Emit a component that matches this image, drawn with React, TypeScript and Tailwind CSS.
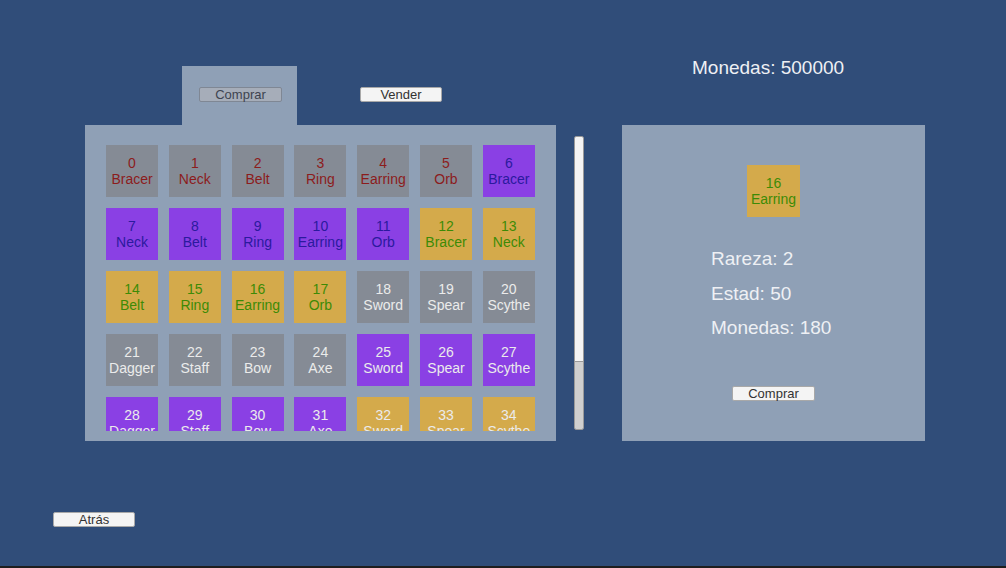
import React from "react";

type Tile = { n: number; name: string; bg: string; fg: string };

const acc = ["Bracer", "Neck", "Belt", "Ring", "Earring", "Orb"];
const weap = ["Sword", "Spear", "Scythe", "Dagger", "Staff", "Bow", "Axe"];

const GRAY = "bg-[#858b95]";
const PURPLE = "bg-[#8a40e4]";
const GOLD = "bg-[#d4aa4b]";

function buildTiles(): Tile[] {
  const out: Tile[] = [];
  for (let i = 0; i < 35; i++) {
    let name = "";
    let bg = GRAY;
    let fg = "text-[#ebebeb]";
    if (i < 18) {
      name = acc[i % 6];
      if (i < 6) {
        bg = GRAY;
        fg = "text-[#8c1c1c]";
      } else if (i < 12) {
        bg = PURPLE;
        fg = "text-[#2b1a9e]";
      } else {
        bg = GOLD;
        fg = "text-[#3d8a06]";
      }
    } else {
      name = weap[(i - 18) % 7];
      if (i < 25) bg = GRAY;
      else if (i < 32) bg = PURPLE;
      else bg = GOLD;
    }
    out.push({ n: i, name, bg, fg });
  }
  return out;
}

const tiles = buildTiles();

function ItemTile({ t }: { t: Tile }) {
  return (
    <div
      className={`w-[52px] h-[52px] ${t.bg} ${t.fg} flex flex-col items-center justify-center text-[14px] leading-[16px]`}
    >
      <span>{t.n}</span>
      <span>{t.name}</span>
    </div>
  );
}

function Btn({ label, w, gray }: { label: string; w: string; gray?: boolean }) {
  return (
    <div
      className={`${w} h-[15px] rounded-[2px] border flex items-center justify-center text-[13px] leading-none ${
        gray
          ? "bg-[#a6adb9] border-[#7f8794] text-[#3e4450]"
          : "bg-[#f4f4f4] border-[#a8a8a8] text-[#323232]"
      }`}
    >
      {label}
    </div>
  );
}

export default function App() {
  return (
    <div
      className="w-[1006px] h-[568px] flex flex-col bg-[#1e1e1e]"
      style={{ fontFamily: '"Liberation Sans", Arial, sans-serif' }}
    >
      <div className="w-[1006px] h-[566px] bg-[#304d79] flex flex-col">
        {/* Top row */}
        <div className="h-[125px] flex items-start">
          <div className="ml-[182px] mt-[66px] w-[115px] h-[59px] bg-[#8fa0b6] pt-[21px] pl-[17px]">
            <Btn label="Comprar" w="w-[83px]" gray />
          </div>
          <div className="ml-[63px] mt-[87px]">
            <Btn label="Vender" w="w-[82px]" />
          </div>
          <div className="ml-[250px] mt-[57px] text-[19px] leading-[22px] text-[#eef0f4]">
            Monedas: 500000
          </div>
        </div>

        {/* Middle row */}
        <div className="flex items-start h-[316px]">
          <div className="ml-[85px] w-[471px] h-[316px] bg-[#8fa0b6]">
            <div className="h-[306px] overflow-hidden pl-[21px] pt-[20px]">
              <div className="grid grid-cols-[repeat(7,52px)] gap-x-[10.8px] gap-y-[11px]">
                {tiles.map((t) => (
                  <ItemTile key={t.n} t={t} />
                ))}
              </div>
            </div>
          </div>

          <div className="ml-[18px] mt-[11px] w-[10px] h-[294px] rounded-[2px] border border-[#9a9a9a] overflow-hidden flex flex-col">
            <div className="flex-1 bg-[#f4f4f4]" />
            <div className="h-[68px] bg-[#cfcfcf] border-t border-[#9a9a9a]" />
          </div>

          <div className="ml-[38px] w-[303px] h-[316px] bg-[#8fa0b6] flex flex-col">
            <div className="mt-[40px] self-center w-[53px] h-[52px] bg-[#d4aa4b] text-[#3d8a06] flex flex-col items-center justify-center text-[14px] leading-[16px]">
              <span>16</span>
              <span>Earring</span>
            </div>
            <div className="ml-[89px] mt-[25px] flex flex-col text-[19px] leading-[34.5px] text-[#eef0f4]">
              <span>Rareza: 2</span>
              <span>Estad: 50</span>
              <span>Monedas: 180</span>
            </div>
            <div className="self-center mt-[40px]">
              <Btn label="Comprar" w="w-[83px]" />
            </div>
          </div>
        </div>

        {/* Bottom */}
        <div className="ml-[53px] mt-[71px]">
          <Btn label="Atrás" w="w-[82px]" />
        </div>
      </div>
    </div>
  );
}
